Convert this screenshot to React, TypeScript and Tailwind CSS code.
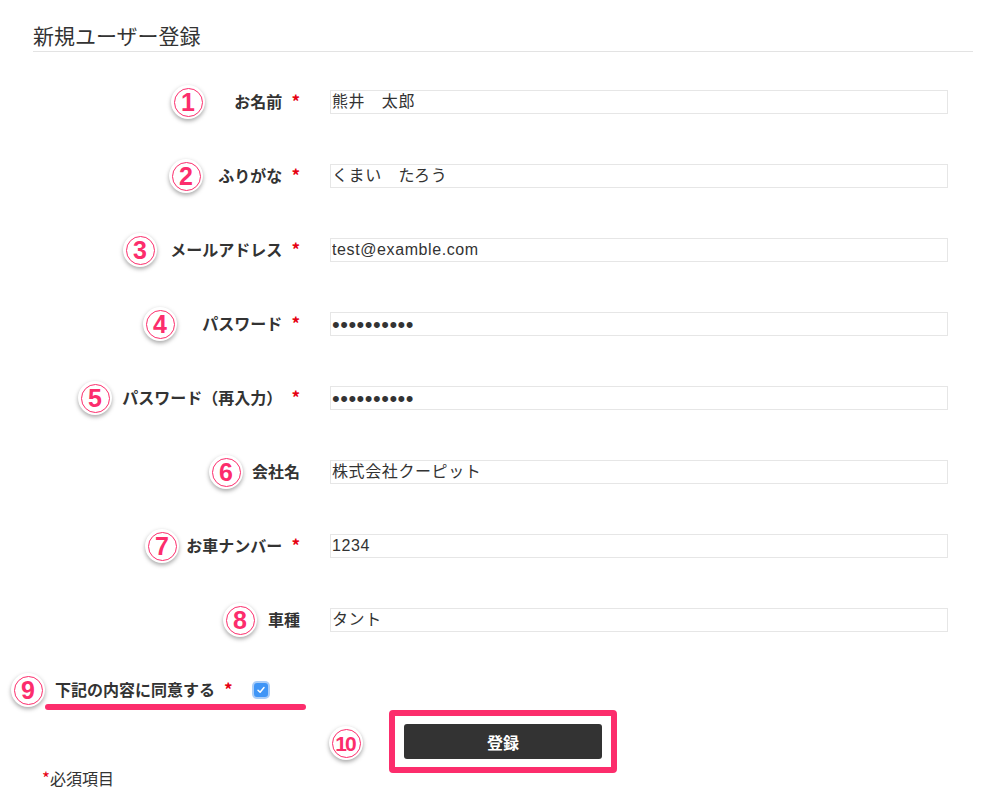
import React from 'react';

const PINK = 'text-[#fc2d6c]';

type Field = {
    label: string;
    value: string;
    required: boolean;
    type?: string;
};

const fields: Field[] = [
    { label: 'お名前', value: '熊井　太郎', required: true },
    { label: 'ふりがな', value: 'くまい　たろう', required: true },
    { label: 'メールアドレス', value: 'test@examble.com', required: true },
    { label: 'パスワード', value: 'password12', required: true, type: 'password' },
    { label: 'パスワード（再入力）', value: 'password12', required: true, type: 'password' },
    { label: '会社名', value: '株式会社クーピット', required: false },
    { label: 'お車ナンバー', value: '1234', required: true },
    { label: '車種', value: 'タント', required: false },
];

// annotation markers laid over the form
const markers = [
    { n: '1', pos: 'left-[171px] top-[85px]' },
    { n: '2', pos: 'left-[169px] top-[159px]' },
    { n: '3', pos: 'left-[123px] top-[233px]' },
    { n: '4', pos: 'left-[143px] top-[307px]' },
    { n: '5', pos: 'left-[78px] top-[381px]' },
    { n: '6', pos: 'left-[209px] top-[455px]' },
    { n: '7', pos: 'left-[145px] top-[529px]' },
    { n: '8', pos: 'left-[223px] top-[603px]' },
    { n: '9', pos: 'left-[11px] top-[673px]' },
    { n: '10', pos: 'left-[329px] top-[726px]' },
];

const Marker: React.FC<{ n: string; pos: string }> = ({ n, pos }) => (
    <div
        className={`absolute ${pos} w-[34px] h-[34px] rounded-full bg-white shadow-[0_2px_4px_rgba(0,0,0,0.35)] flex items-center justify-center`}
    >
        <div
            className={`w-[29px] h-[29px] rounded-full border-[1.5px] border-[#fc2d6c] flex items-center justify-center ${PINK} font-bold font-['Liberation_Sans',sans-serif] ${n.length > 1 ? 'text-[21px] tracking-[-2px] pr-[2px]' : 'text-[25px]'} leading-none`}
        >
            {n}
        </div>
    </div>
);

const Required: React.FC<{ className?: string }> = ({ className = '' }) => (
    <span className={`text-[#e60012] font-bold text-[17px] ${className}`}>*</span>
);

const App: React.FC = () => {
    return (
        <div className="relative min-h-[805px] bg-white text-[#333] font-['Noto_Sans_CJK_JP',sans-serif]">
            <div className="pl-[33px] pr-[16px] pt-[20px]">
                <h1 className="text-[21px] leading-[30px] pb-[1px] border-b border-[#e3e3e3]">
                    新規ユーザー登録
                </h1>

                <form className="mt-[38px] flex flex-col gap-[50px]" onSubmit={e => e.preventDefault()}>
                    {fields.map(field => (
                        <div key={field.label} className="flex items-center h-[24px]">
                            <label className="w-[267px] text-right text-[16px] font-bold leading-[24px] pb-[3px]">
                                {field.label}
                                {field.required && <Required className="ml-[9px]" />}
                            </label>
                            <input
                                type={field.type || 'text'}
                                value={field.value}
                                readOnly
                                className={`ml-[30px] w-[618px] h-[24px] border border-[#e6e6e6] pl-[1px] text-[#333] font-['Liberation_Sans','Noto_Sans_CJK_JP',sans-serif] outline-none ${field.type === 'password' ? 'text-[22px] tracking-[0.5px]' : 'text-[16px] tracking-[0.6px]'}`}
                            />
                        </div>
                    ))}
                </form>

                <div className="mt-[46px] pl-[22px] flex items-center h-[24px]">
                    <span className="text-[16px] font-bold leading-[24px] pb-[2px]">下記の内容に同意する</span>
                    <Required className="ml-[9px] pb-[2px]" />
                    <span className="ml-[21px] w-[14px] h-[14px] rounded-[3px] bg-[#3f95f6] ring-2 ring-[#a9cdf8] flex items-center justify-center">
                        <svg width="10" height="10" viewBox="0 0 10 10" fill="none">
                            <path d="M2 5.2 L4.1 7.3 L8 2.6" stroke="white" strokeWidth="1.5" strokeLinecap="round" strokeLinejoin="round" />
                        </svg>
                    </span>
                </div>

                <div className="mt-[8px] mx-auto w-[228px] border-[6px] border-[#fc2d6c] rounded-[4px] px-[9px] py-[8px]">
                    <button
                        type="button"
                        className="w-full h-[35px] rounded-[3px] bg-[#333] text-white text-[16px] font-bold"
                    >
                        登録
                    </button>
                </div>

                <p className="mt-[-7px] pl-[9px] text-[16px] leading-[24px]">
                    <Required className="font-normal text-[16px]" />必須項目
                </p>
            </div>

            {/* pink underline annotation */}
            <div className="absolute left-[45px] top-[704px] w-[261px] h-[6px] rounded-full bg-[#fc2d6c]" />

            {markers.map(m => (
                <Marker key={m.n} n={m.n} pos={m.pos} />
            ))}
        </div>
    );
};

export default App;
